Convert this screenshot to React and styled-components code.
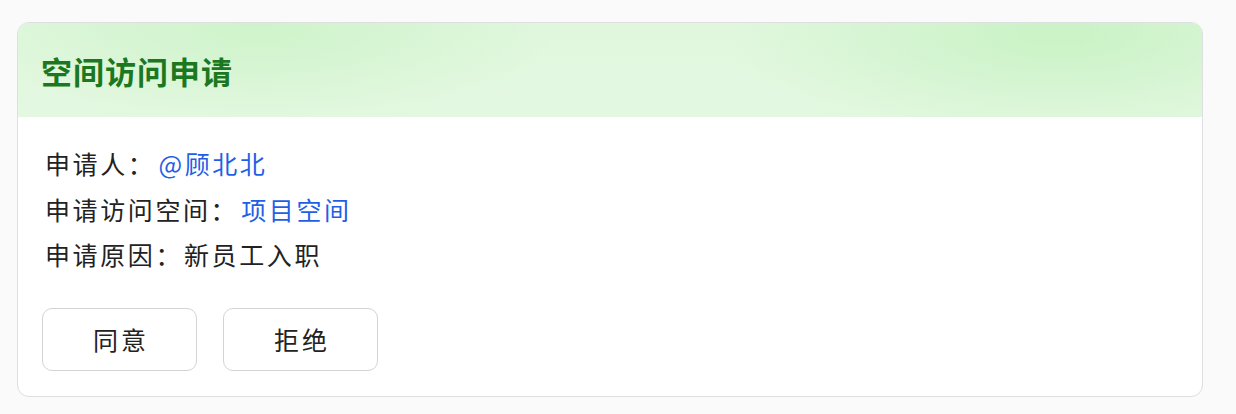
import React from "react";
import styled, { createGlobalStyle } from "styled-components";

const Global = createGlobalStyle`
  html, body { margin: 0; padding: 0; background: #fafafa; }
  body {
    font-family: "Noto Sans CJK SC", "Noto Sans", sans-serif;
    color: #222;
  }
`;

const Page = styled.div`
  padding: 22px 33px 17px 17px;
`;

const Card = styled.div`
  border: 1px solid #dedee3;
  border-radius: 12px;
  background: #fff;
  overflow: hidden;
`;

const Header = styled.div`
  height: 94px;
  display: flex;
  align-items: center;
  padding: 0 23px;
  background:
    radial-gradient(ellipse 440px 150px at 1040px 10px, rgba(200, 242, 196, 0.95), rgba(200, 242, 196, 0) 75%),
    radial-gradient(ellipse 400px 140px at 240px 0px, rgba(204, 243, 200, 0.9), rgba(204, 243, 200, 0) 75%),
    linear-gradient(180deg, #e0f7dd 0%, #e4f8e1 100%);
`;

const Title = styled.h2`
  margin: 0;
  font-size: 31px;
  font-weight: 700;
  color: #1b7820;
  letter-spacing: 1px;
`;

const Body = styled.div`
  padding: 24px 24px 25px;
`;

const Lines = styled.div`
  display: flex;
  flex-direction: column;
  padding-left: 3px;
`;

const Line = styled.div`
  font-size: 25px;
  line-height: 45.5px;
  color: #222;
  letter-spacing: 2.6px;
  white-space: nowrap;
`;

const Value = styled.span`
  color: ${(p) => (p.$link ? "#1f5fe6" : "#222")};
  margin-left: ${(p) => (p.$link ? "3px" : "1px")};
`;

const Actions = styled.div`
  display: flex;
  gap: 26px;
  margin-top: 30px;
`;

const Button = styled.button`
  width: 155px;
  height: 63px;
  border: 1.5px solid #d3d3d8;
  border-radius: 10px;
  background: #fff;
  font-family: inherit;
  font-size: 25px;
  letter-spacing: 3px;
  padding: 0 0 0 3px;
  color: #222;
  cursor: pointer;
`;

export default function App() {
  return (
    <>
      <Global />
      <Page>
        <Card>
          <Header>
            <Title>空间访问申请</Title>
          </Header>
          <Body>
            <Lines>
              <Line>
                申请人：<Value $link>@顾北北</Value>
              </Line>
              <Line>
                申请访问空间：<Value $link>项目空间</Value>
              </Line>
              <Line>
                申请原因：<Value>新员工入职</Value>
              </Line>
            </Lines>
            <Actions>
              <Button>同意</Button>
              <Button>拒绝</Button>
            </Actions>
          </Body>
        </Card>
      </Page>
    </>
  );
}
